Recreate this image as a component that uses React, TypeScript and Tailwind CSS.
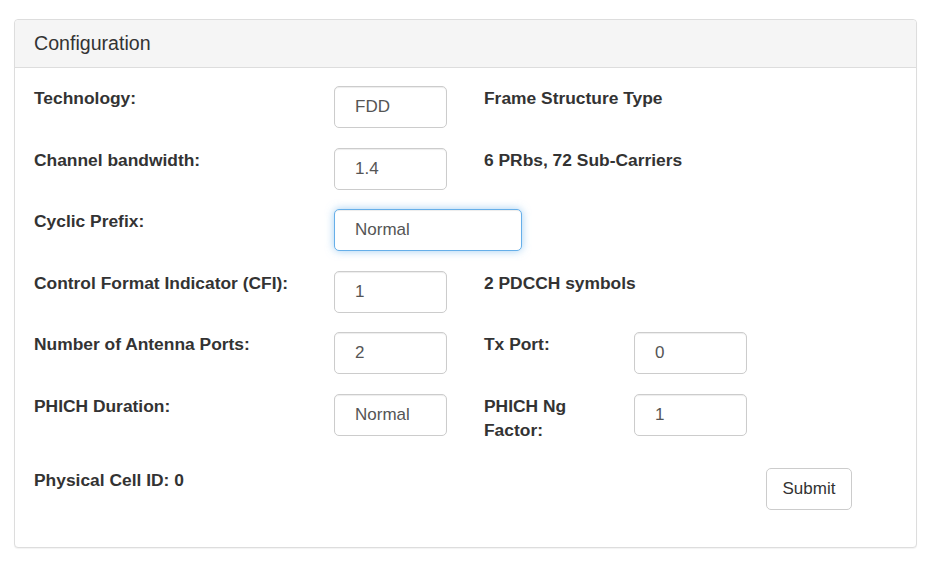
import React from 'react';

const font = { fontFamily: '"Liberation Sans", Arial, sans-serif' };

function Field({ value, wide, focused }: { value: string; wide?: boolean; focused?: boolean }) {
  return (
    <input
      readOnly
      value={value}
      className={
        'h-[42px] rounded-[5px] border bg-white pl-[20px] text-[17px] text-[#555] outline-none ' +
        (wide ? 'w-[188px] ' : 'w-[113px] ') +
        (focused
          ? 'border-[#66afe9] shadow-[inset_0_1px_1px_rgba(0,0,0,0.075),0_0_8px_rgba(102,175,233,0.6)]'
          : 'border-[#ccc] shadow-[inset_0_1px_1px_rgba(0,0,0,0.075)]')
      }
      style={font}
    />
  );
}

function Row({ label, children, className }: { label: string; children?: React.ReactNode; className?: string }) {
  return (
    <div className={'grid grid-cols-[300px_150px_150px_1fr] items-start ' + (className ?? 'mb-[19.5px]')}>
      <div className="text-[17.4px] font-bold leading-[24px] text-[#333]">{label}</div>
      {children}
    </div>
  );
}

function Note({ text, width }: { text: string; width?: string }) {
  return (
    <div className={'text-[17.4px] font-bold leading-[24px] text-[#333] ' + (width ?? 'whitespace-nowrap')}>{text}</div>
  );
}

export default function App() {
  return (
    <div className="min-h-[562px] bg-white pl-[14px] pt-[19px]" style={font}>
      <div className="w-[903px] rounded-[4px] border border-[#ddd] bg-white shadow-[0_1px_1px_rgba(0,0,0,0.05)]">
        <div className="h-[48px] rounded-t-[4px] border-b border-[#ddd] bg-[#f5f5f5] pl-[19px] pt-[10px] text-[19.6px] leading-[26px] text-[#333]">
          Configuration
        </div>
        <div className="px-[19px] pb-[37px] pt-[18px]">
          <Row label="Technology:">
            <Field value="FDD" />
            <Note text="Frame Structure Type" />
          </Row>
          <Row label="Channel bandwidth:">
            <Field value="1.4" />
            <Note text="6 PRbs, 72 Sub-Carriers" />
          </Row>
          <Row label="Cyclic Prefix:">
            <div className="col-span-2">
              <Field value="Normal" wide focused />
            </div>
          </Row>
          <Row label="Control Format Indicator (CFI):">
            <Field value="1" />
            <Note text="2 PDCCH symbols" />
          </Row>
          <Row label="Number of Antenna Ports:">
            <Field value="2" />
            <Note text="Tx Port:" />
            <Field value="0" />
          </Row>
          <Row label="PHICH Duration:" className="mb-[26px]">
            <Field value="Normal" />
            <Note text="PHICH Ng Factor:" width="w-[120px]" />
            <Field value="1" />
          </Row>
          <div className="flex items-start">
            <div className="w-[732px] text-[17.4px] font-bold leading-[24px] text-[#333]">Physical Cell ID: 0</div>
            <button className="h-[42px] w-[86px] rounded-[5px] border border-[#ccc] bg-white text-[17px] text-[#333]" style={font}>
              Submit
            </button>
          </div>
        </div>
      </div>
    </div>
  );
}
